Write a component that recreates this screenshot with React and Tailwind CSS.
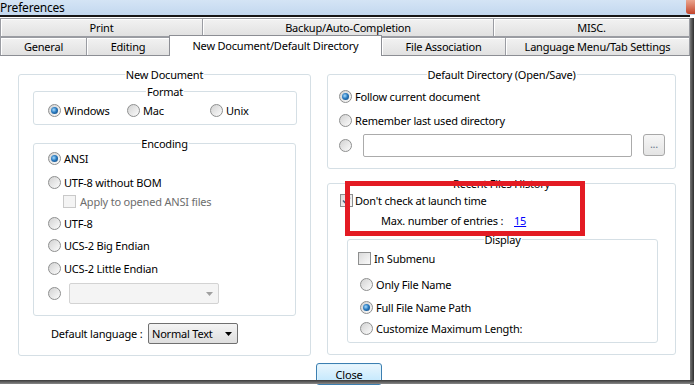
import React from 'react';

function Radio({ on }) {
  return (
    <span className="flex w-[13px] h-[13px] shrink-0 items-center justify-center rounded-full border border-[#8e8f8f] bg-linear-to-br from-[#d2d2d2] to-[#fcfcfc]">
      {on && <span className="w-[7px] h-[7px] rounded-full bg-[radial-gradient(circle_at_40%_40%,#a8dcff_0%,#2a7bc0_45%,#0d3c6e_100%)]" />}
    </span>
  );
}

function Check({ on, disabled }) {
  return (
    <span className={`flex w-[13px] h-[13px] shrink-0 items-center justify-center border ${disabled ? 'border-[#c9c9c9] bg-[#f4f4f4]' : 'border-[#8e8f8f] bg-linear-to-br from-[#dadada] to-[#fafafa]'}`}>
      {on && (
        <svg width="9" height="9" viewBox="0 0 9 9">
          <path d="M1 4.5 L3.5 7 L8 1.5" fill="none" stroke="#4a5f7a" strokeWidth="1.6" />
        </svg>
      )}
    </span>
  );
}

function Group({ title, className, children }) {
  return (
    <div className={`relative rounded-[3px] border border-[#d5dfe5] ${className}`}>
      <span className="absolute left-1/2 -top-[8px] -translate-x-1/2 whitespace-nowrap bg-white px-[1px] leading-[15px]">{title}</span>
      {children}
    </div>
  );
}

function Row({ className = '', children }) {
  return <div className={`flex h-[14px] items-center ${className}`}>{children}</div>;
}

function Tab({ label, className = '', active }) {
  if (active) {
    return (
      <div className={`relative z-10 -mt-[2px] -mb-[1px] flex items-center justify-center border border-b-0 border-[#8c8e94] bg-white pb-[2px] ${className}`}>
        {label}
      </div>
    );
  }
  return (
    <div className={`flex items-center justify-center border border-[#9a9ca2] bg-linear-to-b from-[#f2f2f2] to-[#e1e1e1] shadow-[inset_1px_1px_0_#fff] ${className}`}>
      {label}
    </div>
  );
}

function Arrow({ color }) {
  return (
    <svg width="7" height="4" viewBox="0 0 7 4">
      <path d="M0 0 H7 L3.5 4 Z" fill={color} />
    </svg>
  );
}

export default function App() {
  return (
    <div className="relative w-[695px] h-[385px] overflow-hidden bg-white font-['Noto_Sans',sans-serif] text-[11px] leading-none tracking-[-0.2px] text-black">
      {/* title bar */}
      <div className="flex h-[15px] bg-linear-to-b from-[#d4e4f5] to-[#c3d8ef]">
        <span className="text-[12px] leading-[15px]">Preferences</span>
        <div className="ml-auto h-[14px] w-[9px] rounded-bl-[3px] bg-linear-to-b from-[#eaa58f] to-[#c2432a]" />
      </div>

      <div className="flex h-[370px]">
        <div className="flex w-[690px] flex-col">
          <div className="h-[2px] bg-[#161616]" />
          <div className="h-[1px]" />

          {/* tabs */}
          <div className="flex h-[19px]">
            <Tab label="Print" className="w-[203px]" />
            <Tab label="Backup/Auto-Completion" className="-ml-[1px] w-[292px]" />
            <Tab label="MISC." className="-ml-[1px] flex-1" />
          </div>
          <div className="flex h-[19px] border-b border-[#8c8e94]">
            <Tab label="General" className="w-[87px] border-b-0" />
            <Tab label="Editing" className="-ml-[1px] w-[84px] border-b-0" />
            <Tab label="New Document/Default Directory" className="-ml-[1px] w-[213px]" active />
            <Tab label="File Association" className="-ml-[1px] w-[125px] border-b-0" />
            <Tab label="Language Menu/Tab Settings" className="-ml-[1px] flex-1 border-b-0" />
          </div>

          {/* page */}
          <div className="flex pl-[18px] pt-[18px]">
            <Group title="New Document" className="h-[282px] w-[293px]">
              <Group title="Format" className="ml-[14px] mt-[16px] h-[34px] w-[264px]">
                <Row className="ml-[14px] mt-[11px]">
                  <div className="flex w-[79px] items-center gap-[3px]"><Radio on /><span>Windows</span></div>
                  <div className="flex w-[83px] items-center gap-[3px]"><Radio /><span>Mac</span></div>
                  <div className="flex items-center gap-[3px]"><Radio /><span>Unix</span></div>
                </Row>
              </Group>
              <Group title="Encoding" className="ml-[14px] mt-[18px] h-[173px] w-[263px]">
                <div className="flex flex-col pl-[14px]">
                  <Row className="mt-[7px] gap-[3px]"><Radio on /><span>ANSI</span></Row>
                  <Row className="mt-[10px] gap-[3px]"><Radio /><span>UTF-8 without BOM</span></Row>
                  <Row className="ml-[15px] mt-[5px] gap-[4px] text-[#6d6d6d]"><Check disabled /><span>Apply to opened ANSI files</span></Row>
                  <Row className="mt-[8px] gap-[3px]"><Radio /><span>UTF-8</span></Row>
                  <Row className="mt-[8px] gap-[3px]"><Radio /><span>UCS-2 Big Endian</span></Row>
                  <Row className="mt-[9px] gap-[3px]"><Radio /><span>UCS-2 Little Endian</span></Row>
                  <div className="mt-[8px] flex h-[21px] items-center gap-[8px]">
                    <Radio />
                    <div className="flex h-[21px] w-[150px] items-center justify-end rounded-[2px] border border-[#d3d3d3] bg-[#f4f4f4] pr-[5px]">
                      <Arrow color="#a0a0a0" />
                    </div>
                  </div>
                </div>
              </Group>
              <div className="ml-[32px] mt-[7px] flex h-[21px] items-center">
                <span className="w-[97px]">Default language :</span>
                <div className="flex h-[21px] w-[90px] items-center justify-between rounded-[2px] border border-[#707070] bg-linear-to-b from-[#f4f4f4] to-[#dedede] pl-[3px] pr-[5px]">
                  <span>Normal Text</span>
                  <Arrow color="#000" />
                </div>
              </div>
            </Group>

            <div className="ml-[16px] flex flex-col">
              <Group title="Default Directory (Open/Save)" className="h-[95px] w-[349px]">
                <div className="flex flex-col pl-[11px]">
                  <Row className="mt-[14px] gap-[3px]"><Radio on /><span>Follow current document</span></Row>
                  <Row className="mt-[10px] gap-[3px]"><Radio /><span>Remember last used directory</span></Row>
                  <div className="mt-[7px] flex h-[22px] items-center">
                    <Radio />
                    <div className="ml-[11px] h-[23px] w-[269px] rounded-[2px] border border-[#ababab] bg-white" />
                    <div className="ml-[11px] flex h-[22px] w-[22px] items-center justify-center rounded-[3px] border border-[#a8a8a8] bg-linear-to-b from-[#f6f6f6] to-[#e4e4e4] pb-[4px] text-[#6a7a8c]">...</div>
                  </div>
                </div>
              </Group>

              <Group title="Recent Files History" className="mt-[14px] h-[172px] w-[349px]">
                <div className="flex flex-col pl-[12px]">
                  <Row className="mt-[9px] gap-[2px]"><Check on /><span>Don't check at launch time</span></Row>
                  <Row className="ml-[41px] mt-[6px]">
                    <span className="w-[133px]">Max. number of entries :</span>
                    <span className="text-[#0000ff] underline">15</span>
                  </Row>
                </div>
                <Group title="Display" className="ml-[19px] mt-[12px] h-[104px] w-[311px]">
                  <div className="flex flex-col">
                    <Row className="ml-[10px] mt-[11px] gap-[3px]"><Check /><span>In Submenu</span></Row>
                    <Row className="ml-[12px] mt-[12px] gap-[3px]"><Radio /><span>Only File Name</span></Row>
                    <Row className="ml-[12px] mt-[9px] gap-[3px]"><Radio on /><span>Full File Name Path</span></Row>
                    <Row className="ml-[12px] mt-[7px] gap-[3px]"><Radio /><span>Customize Maximum Length:</span></Row>
                  </div>
                </Group>
              </Group>
            </div>
          </div>

          <div className="ml-[316px] mt-[7px] flex h-[22px] w-[66px] items-center justify-center rounded-[3px] border border-[#3c7fb1] bg-linear-to-b from-[#eaf6fd] to-[#bee6fd] shadow-[inset_0_0_0_1px_#def3fd] text-[11px]">
            Close
          </div>
        </div>
        <div className="mt-[3px] w-[4px] bg-linear-to-r from-[#7a7a7a] to-[#2e2e2e]" />
      </div>

      {/* window frame shadow along the bottom */}
      <div className="absolute left-0 top-[380px] h-[4px] w-[694px] bg-linear-to-b from-[#3a3a3a] to-[#8a8a8a]" />

      {/* red annotation box */}
      <div className="absolute left-[345px] top-[181px] h-[55px] w-[240px] border-[5px] border-[#e31b23]" />
    </div>
  );
}
